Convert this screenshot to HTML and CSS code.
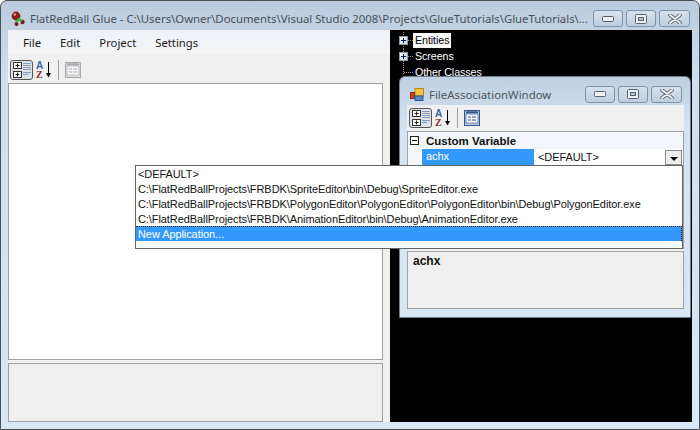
FILE: index.html
```html
<!DOCTYPE html>
<html>
<head>
  <title>FlatRedBall Glue</title>
  <link rel="stylesheet" href="styles.css">
</head>
<body>
  <svg class="defs" width="0" height="0">
    <symbol id="ico-cat" viewBox="0 0 18 16">
      <rect x="0.5" y="0.5" width="8" height="6" fill="#fff" stroke="#333"/>
      <path d="M2.5 3.5h4M4.5 1.5v4" stroke="#222"/>
      <rect x="0.5" y="9.5" width="8" height="6" fill="#fff" stroke="#333"/>
      <path d="M2.5 12.5h4M4.5 10.5v4" stroke="#222"/>
      <path d="M10 1.5h8M10 3.5h8M10 5.5h8M10 7.5h8M10 10.5h8M10 12.5h5" stroke="#7f9cbf"/>
    </symbol>
    <symbol id="ico-arrow" viewBox="0 0 17 20">
      <path d="M12.5 2v12" stroke="#000"/>
      <path d="M10 13h5l-2.5 4.5z" fill="#000"/>
    </symbol>
    <symbol id="ico-pages" viewBox="0 0 16 16">
      <rect x="0.5" y="0.5" width="15" height="15" fill="currentColor" opacity="0.25"/>
      <rect x="0.5" y="0.5" width="15" height="15" fill="none" stroke="currentColor"/>
      <rect x="2" y="4" width="12" height="9" fill="#f4f6f8" stroke="currentColor" stroke-width="0.6"/>
      <path d="M2 2.3h12" stroke="currentColor" stroke-width="2"/>
      <path d="M4 7h3M8 7h4M4 10h3M8 10h4" stroke="currentColor"/>
    </symbol>
    <symbol id="ico-min" viewBox="0 0 12 6">
      <rect x="0.5" y="0.5" width="11" height="5" rx="1" fill="#eef1f4" stroke="#56606c"/>
    </symbol>
    <symbol id="ico-max" viewBox="0 0 12 10">
      <rect x="0.5" y="0.5" width="11" height="9" rx="1" fill="#eef1f4" stroke="#56606c"/>
      <rect x="3.5" y="3.5" width="5" height="3" fill="#b9c8d8" stroke="#56606c"/>
    </symbol>
    <symbol id="ico-close" viewBox="0 0 14 10">
      <path d="M2 1l10 8M12 1l-10 8" stroke="#56606c" stroke-width="3.6" fill="none" stroke-linecap="round"/>
      <path d="M2 1l10 8M12 1l-10 8" stroke="#eef1f4" stroke-width="2" fill="none" stroke-linecap="round"/>
    </symbol>
  </svg>

  <div class="window">
    <div class="titlebar">
      <svg class="logo" width="16" height="16" viewBox="0 0 16 16">
        <circle cx="5" cy="5" r="4.4" fill="#8e1a22"/>
        <circle cx="3.8" cy="3.6" r="1.4" fill="#d88"/>
        <circle cx="11.5" cy="11" r="2.2" fill="#7a1820"/>
        <circle cx="5.5" cy="13" r="2" fill="#7a1820"/>
        <path d="M5 11l3-3 3 2" stroke="#36b53c" stroke-width="2.4" fill="none"/>
      </svg>
      <span class="title-text">FlatRedBall Glue - C:\Users\Owner\Documents\Visual Studio 2008\Projects\GlueTutorials\GlueTutorials\...</span>
      <div class="caption-btns">
        <div class="cap-btn"><svg width="12" height="6"><use href="#ico-min"/></svg></div>
        <div class="cap-btn"><svg width="12" height="10"><use href="#ico-max"/></svg></div>
        <div class="cap-btn cap-close"><svg width="14" height="10"><use href="#ico-close"/></svg></div>
      </div>
    </div>

    <div class="client">
      <div class="left-pane">
        <div class="menubar">
          <span>File</span>
          <span>Edit</span>
          <span>Project</span>
          <span>Settings</span>
        </div>
        <div class="toolbar">
          <div class="tool-on"><svg width="18" height="16"><use href="#ico-cat"/></svg></div>
          <svg class="tool-az" width="17" height="20">
            <use href="#ico-arrow"/>
            <text x="0" y="9" class="az-a">A</text>
            <text x="0" y="17.5" class="az-z">Z</text>
          </svg>
          <div class="tool-sep"></div>
          <svg class="tool-pages off" width="16" height="16"><use href="#ico-pages"/></svg>
        </div>
        <div class="grid-empty"></div>
        <div class="desc-empty"></div>
      </div>

      <div class="tree">
        <div class="tree-row">
          <span class="plus"></span><span class="dots"></span><span class="tree-label selected">Entities</span>
        </div>
        <div class="tree-row">
          <span class="plus"></span><span class="dots"></span><span class="tree-label">Screens</span>
        </div>
        <div class="tree-row">
          <span class="no-plus"></span><span class="dots long"></span><span class="tree-label">Other Classes</span>
        </div>
      </div>
    </div>

    <div class="float-window">
      <div class="float-title">
        <svg class="float-logo" width="14" height="13" viewBox="0 0 14 13">
          <rect x="5" y="0.5" width="8.5" height="7.5" fill="#f3c33c" stroke="#b08a20"/>
          <rect x="0.5" y="4.5" width="4" height="6" fill="#c8402c" stroke="#7c2a20"/>
          <rect x="5" y="8" width="8" height="4.5" fill="#5b86c8" stroke="#34558a"/>
        </svg>
        <span class="float-text">FileAssociationWindow</span>
        <div class="caption-btns">
          <div class="cap-btn"><svg width="12" height="6"><use href="#ico-min"/></svg></div>
          <div class="cap-btn"><svg width="12" height="10"><use href="#ico-max"/></svg></div>
          <div class="cap-btn cap-close"><svg width="14" height="10"><use href="#ico-close"/></svg></div>
        </div>
      </div>
      <div class="float-client">
        <div class="float-toolbar">
          <div class="tool-on"><svg width="18" height="16"><use href="#ico-cat"/></svg></div>
          <svg class="tool-az" width="17" height="20">
            <use href="#ico-arrow"/>
            <text x="0" y="9" class="az-a">A</text>
            <text x="0" y="17.5" class="az-z">Z</text>
          </svg>
          <div class="tool-sep"></div>
          <svg class="tool-pages on" width="16" height="16"><use href="#ico-pages"/></svg>
        </div>
        <div class="prop-grid">
          <div class="prop-cat">
            <span class="minus"></span>
            <b>Custom Variable</b>
          </div>
          <div class="prop-row">
            <span class="prop-gutter"></span>
            <span class="prop-name">achx</span>
            <span class="prop-value">&lt;DEFAULT&gt;</span>
            <span class="combo-btn"><i></i></span>
          </div>
        </div>
        <div class="float-desc"><b>achx</b></div>
      </div>
    </div>

    <div class="dropdown">
      <div class="dd-item">&lt;DEFAULT&gt;</div>
      <div class="dd-item">C:\FlatRedBallProjects\FRBDK\SpriteEditor\bin\Debug\SpriteEditor.exe</div>
      <div class="dd-item">C:\FlatRedBallProjects\FRBDK\PolygonEditor\PolygonEditor\PolygonEditor\bin\Debug\PolygonEditor.exe</div>
      <div class="dd-item">C:\FlatRedBallProjects\FRBDK\AnimationEditor\bin\Debug\AnimationEditor.exe</div>
      <div class="dd-item dd-sel">New Application...</div>
    </div>
  </div>
</body>
</html>
```

FILE: styles.css
```css
html, body {
  margin: 0;
  padding: 0;
}
body {
  width: 700px;
  height: 430px;
  overflow: hidden;
  font-family: 'Liberation Sans', Arial, sans-serif;
  font-size: 11px;
  letter-spacing: -0.08px;
  color: #111;
}
.defs {
  position: absolute;
}
.az-a {
  font: bold 10px 'Liberation Sans', sans-serif;
  fill: #3a62b0;
}
.az-z {
  font: bold 10px 'Liberation Serif', serif;
  fill: #8c2f35;
}

.window {
  position: relative;
  box-sizing: border-box;
  width: 700px;
  height: 430px;
  padding: 0 7px 7px 7px;
  display: flex;
  flex-direction: column;
  border: 1px solid #4a4f55;
  border-radius: 7px 7px 0 0;
  background: linear-gradient(#b9cbdd, #d0dfee 80px, #d9e6f4);
}
.titlebar {
  box-sizing: border-box;
  height: 29px;
  padding-top: 6px;
  flex: none;
  display: flex;
  align-items: center;
}
.logo {
  margin: 0 3px 0 3px;
}
.title-text {
  flex: 1;
  font-family: 'Noto Sans', sans-serif;
  font-size: 11.35px;
  letter-spacing: 0;
  color: #47505a;
  white-space: nowrap;
}
.caption-btns {
  flex: none;
  display: flex;
  gap: 3px;
  margin-right: 2px;
}
.cap-btn {
  box-sizing: border-box;
  width: 30px;
  height: 17px;
  display: flex;
  align-items: center;
  justify-content: center;
  border: 1px solid #7f93a8;
  border-radius: 3px;
  background: linear-gradient(#d6e2ee, #bccee0);
}
.cap-close {
  width: 31px;
}

.client {
  flex: 1;
  display: flex;
  min-height: 0;
}
.left-pane {
  width: 382px;
  flex: none;
  display: flex;
  flex-direction: column;
  background: #f0f0f0;
}
.menubar {
  height: 24px;
  flex: none;
  display: flex;
  align-items: center;
  padding-left: 15px;
  font-family: 'Noto Sans', sans-serif;
  font-size: 11.3px;
  letter-spacing: 0;
  color: #1a1a1a;
  background: linear-gradient(#edf2f8, #f4f5f6);
}
.menubar span {
  margin-right: 19px;
}
.toolbar {
  box-sizing: border-box;
  height: 29px;
  padding: 3px 0 0 2px;
  flex: none;
  display: flex;
  align-items: center;
}
.tool-on {
  box-sizing: border-box;
  width: 23px;
  height: 20px;
  display: flex;
  align-items: center;
  justify-content: center;
  border: 1px solid #555;
  border-radius: 3px;
  background: #dfe3e8;
}
.tool-az {
  margin-left: 3px;
}
.tool-sep {
  width: 1px;
  height: 20px;
  margin: 0 6px 0 5px;
  background: #9aa0a6;
}
.tool-pages.off {
  color: #a9a9a9;
}
.tool-pages.on {
  color: #31588f;
}
.grid-empty {
  flex: 1;
  margin-right: 7px;
  border: 1px solid #a0a0a0;
  background: #fff;
}
.desc-empty {
  box-sizing: border-box;
  height: 59px;
  flex: none;
  margin: 3px 7px 0 0;
  border: 1px solid #a0a0a0;
  background: #efefef;
}

.tree {
  flex: 1;
  padding: 2px 0 0 9px;
  background: #000;
  color: #fff;
  font-size: 10.7px;
}
.tree-row {
  height: 16.5px;
  display: flex;
  align-items: center;
  background: linear-gradient(#999 50%, transparent 50%) 4px 0 / 1px 2px repeat-y;
}
.tree-row:last-child {
  height: 16px;
  margin-top: -0.5px;
  background: none;
}
.plus, .minus {
  position: relative;
  box-sizing: border-box;
  display: block;
  flex: none;
  background: #fff;
}
.plus {
  width: 9px;
  height: 9px;
  border: 1px solid #8d9aa8;
  background: linear-gradient(135deg, #fff, #c8d2de);
}
.plus::before, .plus::after, .minus::before {
  content: "";
  position: absolute;
  background: #00156e;
}
.plus::before {
  left: 1px;
  top: 3px;
  width: 5px;
  height: 1px;
}
.plus::after {
  left: 3px;
  top: 1px;
  width: 1px;
  height: 5px;
}
.no-plus {
  box-sizing: border-box;
  width: 5px;
  height: 9px;
  align-self: flex-start;
  flex: none;
  border-right: 1px dotted #999;
}
.dots {
  width: 5px;
  flex: none;
  border-top: 1px dotted #999;
}
.dots.long {
  width: 9px;
}
.tree-label {
  padding: 1px 2px;
  line-height: 13px;
  white-space: nowrap;
}
.tree-label.selected {
  background: #fff;
  color: #000;
}

.float-window {
  position: absolute;
  left: 398px;
  top: 75px;
  width: 292px;
  height: 242px;
  box-sizing: border-box;
  padding: 0 6px 8px 7px;
  display: flex;
  flex-direction: column;
  border: 1px solid #6e7f90;
  border-radius: 6px 6px 0 0;
  background: linear-gradient(#bdcfe1, #d5e3f1 50px, #d9e6f4);
}
.float-title {
  box-sizing: border-box;
  height: 28px;
  padding-top: 6px;
  flex: none;
  display: flex;
  align-items: center;
}
.float-logo {
  margin: 0 5px 0 3px;
}
.float-text {
  flex: 1;
  font-family: 'Noto Sans', sans-serif;
  font-size: 11.4px;
  letter-spacing: 0;
  color: #4c5560;
  white-space: nowrap;
}
.float-client {
  flex: 1;
  display: flex;
  flex-direction: column;
  min-height: 0;
  background: #f0f0f0;
}
.float-toolbar {
  height: 26px;
  flex: none;
  display: flex;
  align-items: center;
  padding-left: 2px;
}
.prop-grid {
  flex: 1;
  border: 1px solid #a0a0a0;
  background: #fff;
}
.prop-cat {
  height: 17px;
  display: flex;
  align-items: center;
  background: #f3f6fb;
  font-size: 11.5px;
  letter-spacing: 0;
}
.minus {
  width: 9px;
  height: 9px;
  margin: 0 7px 0 2px;
  border: 1px solid #222;
}
.minus::before {
  left: 1px;
  top: 3px;
  width: 5px;
  height: 1px;
  background: #000;
}
.prop-row {
  height: 16px;
  display: flex;
  align-items: center;
}
.prop-gutter {
  width: 14px;
  height: 100%;
  flex: none;
  background: #f3f6fb;
}
.prop-name {
  width: 108px;
  height: 100%;
  flex: none;
  padding-left: 4px;
  line-height: 15px;
  background: #3399ff;
  color: #fff;
}
.prop-value {
  flex: 1;
  padding-left: 4px;
}
.combo-btn {
  box-sizing: border-box;
  width: 17px;
  height: 15px;
  margin-right: 1px;
  display: flex;
  align-items: center;
  justify-content: center;
  border: 1px solid #8a8a8a;
  background: #ececec;
}
.combo-btn i {
  width: 0;
  height: 0;
  margin-top: 3px;
  border: 4px solid transparent;
  border-top-color: #000;
  border-bottom: 0;
}
.float-desc {
  box-sizing: border-box;
  height: 58px;
  flex: none;
  margin-top: 2px;
  padding: 2px 5px;
  border: 1px solid #a0a0a0;
  background: #efefef;
  font-size: 12px;
  letter-spacing: 0;
}

.dropdown {
  position: absolute;
  left: 134px;
  top: 164px;
  width: 548px;
  height: 84px;
  box-sizing: border-box;
  border: 1px solid #646464;
  background: #fff;
  color: #111;
}
.dd-item {
  height: 15px;
  line-height: 16px;
  padding-left: 2px;
  white-space: nowrap;
}
.dd-sel {
  box-sizing: border-box;
  border-top: 1px dotted #222;
  border-right: 1px dotted #222;
  background: #3399ff;
  color: #fff;
  line-height: 14px;
}
```
